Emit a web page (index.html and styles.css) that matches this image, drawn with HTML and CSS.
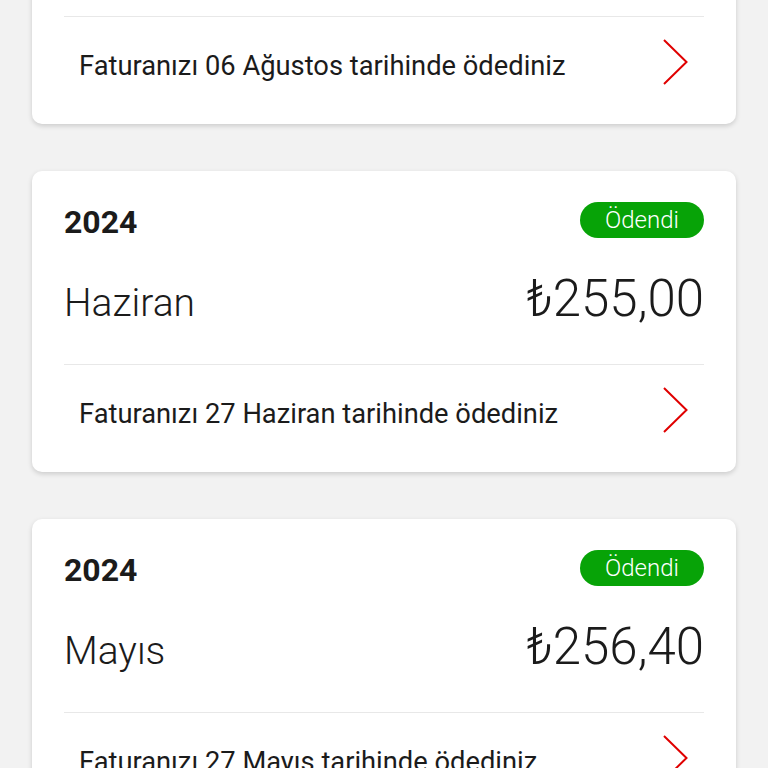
FILE: index.html
```html
<!DOCTYPE html>
<html lang="tr">

<head>
    <meta charset="UTF-8">
    <meta name="viewport" content="width=device-width, initial-scale=1.0">
    <title>Geçmiş Faturalar</title>
    <link rel="stylesheet" href="styles.css">
</head>

<body>
    <main class="bill-list">
        <article class="bill-card">
            <div class="bill-head">
                <span class="bill-year">2024</span>
                <span class="status-badge">Ödendi</span>
            </div>
            <div class="bill-main">
                <span class="bill-month">Temmuz</span>
                <span class="bill-amount">₺255,00</span>
            </div>
            <a class="bill-footer" href="#">
                <span class="bill-note">Faturanızı 06 Ağustos tarihinde ödediniz</span>
                <svg class="chevron" width="25" height="46" viewBox="0 0 25 46"><path d="M1 1 L23.5 23 L1 45" /></svg>
            </a>
        </article>

        <article class="bill-card">
            <div class="bill-head">
                <span class="bill-year">2024</span>
                <span class="status-badge">Ödendi</span>
            </div>
            <div class="bill-main">
                <span class="bill-month">Haziran</span>
                <span class="bill-amount">₺255,00</span>
            </div>
            <a class="bill-footer" href="#">
                <span class="bill-note">Faturanızı 27 Haziran tarihinde ödediniz</span>
                <svg class="chevron" width="25" height="46" viewBox="0 0 25 46"><path d="M1 1 L23.5 23 L1 45" /></svg>
            </a>
        </article>

        <article class="bill-card">
            <div class="bill-head">
                <span class="bill-year">2024</span>
                <span class="status-badge">Ödendi</span>
            </div>
            <div class="bill-main">
                <span class="bill-month">Mayıs</span>
                <span class="bill-amount">₺256,40</span>
            </div>
            <a class="bill-footer" href="#">
                <span class="bill-note">Faturanızı 27 Mayıs tarihinde ödediniz</span>
                <svg class="chevron" width="25" height="46" viewBox="0 0 25 46"><path d="M1 1 L23.5 23 L1 45" /></svg>
            </a>
        </article>
    </main>
</body>

</html>
```

FILE: styles.css
```css
* {
    margin: 0;
    padding: 0;
    box-sizing: border-box
}

:root {
    --page-bg: #f2f2f2;
    --card-bg: #fff;
    --text-color: #1b1b1b;
    --divider: #e8e8e8;
    --paid-green: #07a307;
    --accent-red: #e00000
}

html,
body {
    height: 100%;
    overflow: hidden
}

body {
    background-color: var(--page-bg);
    color: var(--text-color);
    font-family: Roboto, "Liberation Sans", sans-serif
}

/* list is scrolled, first card starts above the viewport */
.bill-list {
    display: flex;
    flex-direction: column;
    gap: 47px;
    padding: 0 32px;
    margin-top: -177px
}

.bill-card {
    background: var(--card-bg);
    border-radius: 10px;
    box-shadow: 0 2px 5px rgba(0, 0, 0, .16);
    padding: 31px 32px 0
}

.bill-head {
    display: flex;
    justify-content: space-between;
    align-items: center;
    height: 36px
}

.bill-year {
    font-size: 32px;
    font-weight: 700;
    line-height: 1;
    padding-top: 4px
}

.status-badge {
    display: flex;
    align-items: center;
    justify-content: center;
    width: 124px;
    height: 36px;
    border-radius: 18px;
    background: var(--paid-green);
    color: #fff;
    font-size: 24px;
    font-weight: 300
}

.bill-main {
    display: flex;
    justify-content: space-between;
    align-items: baseline;
    padding: 29px 0 29px;
    line-height: 64px
}

.bill-month {
    font-size: 39px;
    font-weight: 300
}

.bill-amount {
    font-size: 51px;
    font-weight: 300
}

.bill-footer {
    display: flex;
    justify-content: space-between;
    align-items: center;
    border-top: 1px solid var(--divider);
    padding: 22px 16px 39px 15px;
    color: inherit;
    text-decoration: none
}

.bill-note {
    font-size: 27.3px;
    padding-top: 7px
}

.chevron {
    flex: none;
    fill: none;
    stroke: var(--accent-red);
    stroke-width: 2
}
```
